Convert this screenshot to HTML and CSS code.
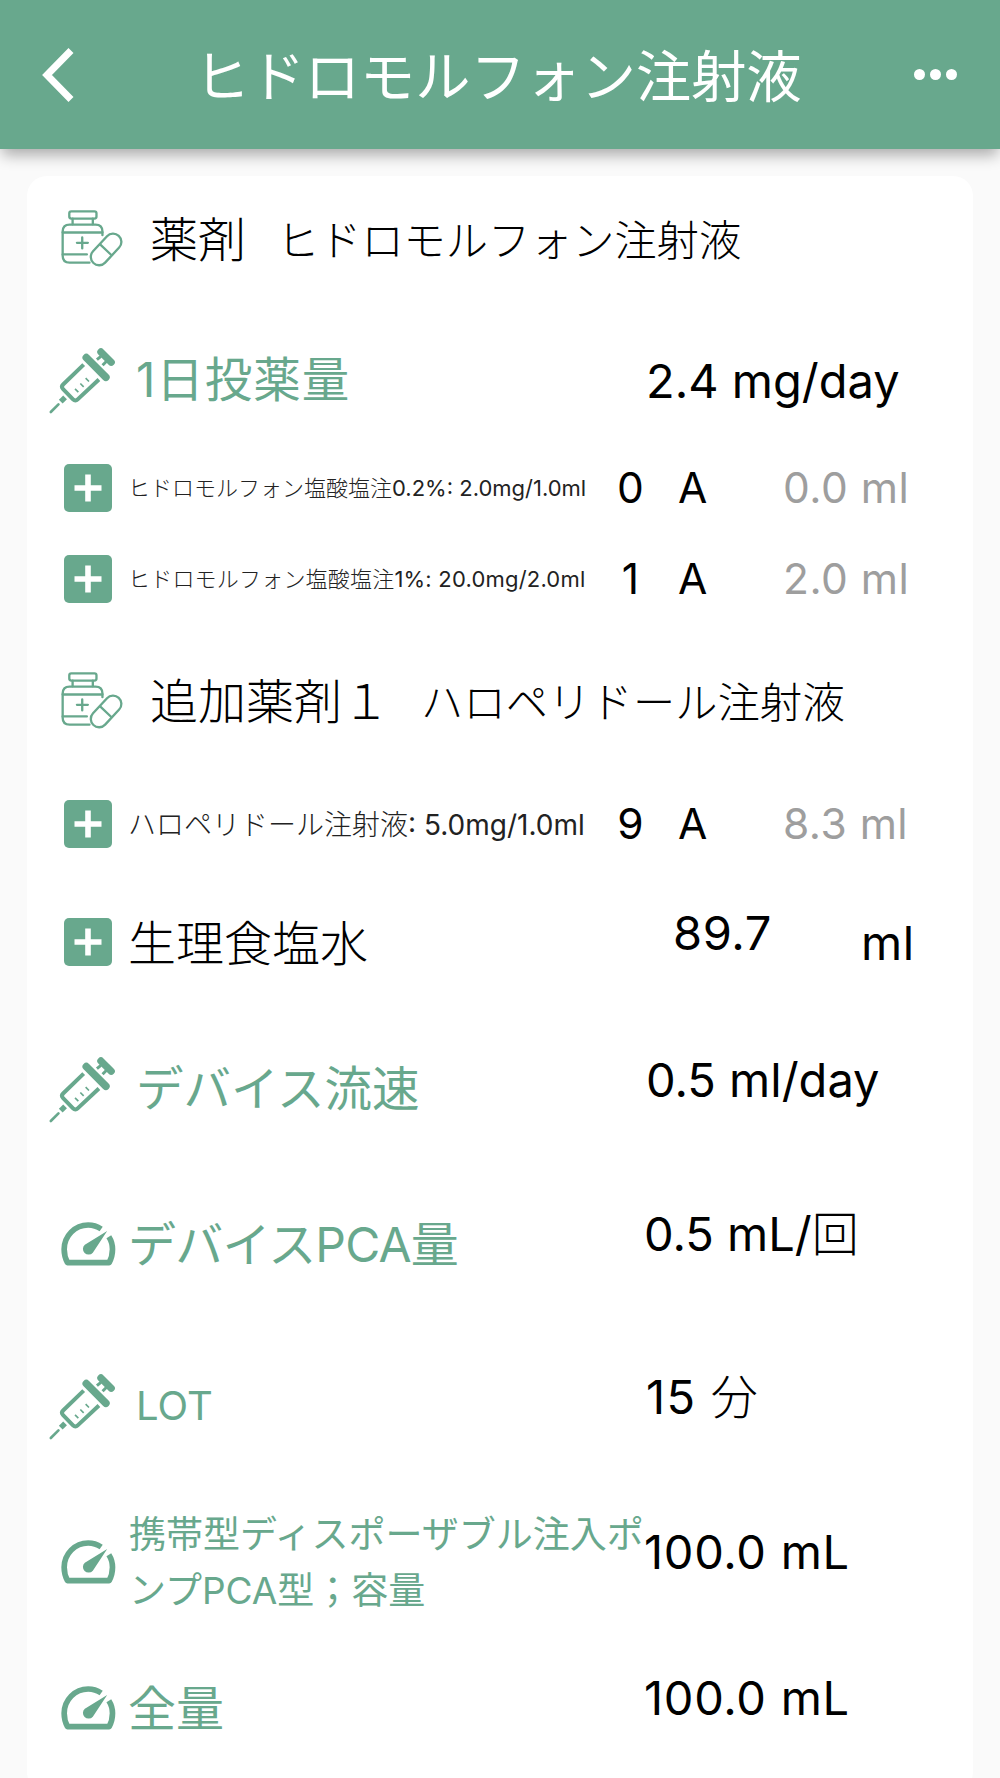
FILE: index.html
```html
<!DOCTYPE html>
<html lang="ja">
<head>
    <meta charset="UTF-8">
    <meta name="viewport" content="width=device-width, initial-scale=1.0">
    <title>ヒドロモルフォン注射液</title>
    <link rel="stylesheet" href="styles.css">
</head>
<body>
    <!-- Shared icons -->
    <svg class="icon-defs" width="0" height="0">
        <symbol id="bottle" viewBox="90 55 190 178">
            <g fill="none" stroke="currentColor" stroke-width="7" stroke-linecap="round" stroke-linejoin="round">
                <rect x="118" y="65" width="82" height="22" rx="6"/>
                <path d="M128 87v17M189 87v17"/>
                <path d="M218 137V126Q218 105 197 105H119Q98 105 98 126V199Q98 220 119 220H179"/>
                <path d="M98 129H218M98 195H171M157 144V177M141 160H174"/>
                <rect x="173" y="155" width="112" height="50" rx="25" transform="rotate(-47 229 180)"/>
                <path d="M211 165L244 196"/>
            </g>
        </symbol>
        <symbol id="syringe" viewBox="50 45 210 205">
            <g fill="none" stroke="currentColor">
                <path stroke-width="8" stroke-linecap="round" d="M61 244L84 221"/>
                <path stroke-width="16" d="M91 213L104 200"/>
                <path stroke-width="12" d="M160 101L98 161Q91 168 98 175L128 206Q135 213 142 206L206 146"/>
                <path stroke-width="23" stroke-linecap="round" d="M168 80L227 139"/>
                <path stroke-width="5" d="M134 174L144 184M150 158L160 168M166 142L176 152"/>
                <path stroke-width="22" stroke-linecap="round" d="M212 63L243 94"/>
                <path stroke-width="9" d="M200 86L212 76M217 103L229 91"/>
            </g>
        </symbol>
        <symbol id="gauge" viewBox="90 543 170 138">
            <path fill="none" stroke="currentColor" stroke-width="17" stroke-linejoin="round" d="M213 567Q195 555 174 555A72 73 0 0 0 102 628Q102 650 112 668H237Q247 650 247 628Q247 607 236 590"/>
            <path fill="currentColor" d="M231 573L164 614A17 17 0 1 0 188 638Z"/>
        </symbol>
        <symbol id="plus" viewBox="0 0 48 48">
            <rect width="48" height="48" rx="5" fill="currentColor"/>
            <path d="M24 10.5V37.5M10.5 24H37.5" stroke="#fff" stroke-width="5.6"/>
        </symbol>
    </svg>

    <header class="app-bar">
        <svg class="back" viewBox="0 0 32 54"><path d="M29 2.5L5 27L29 51.5" fill="none" stroke="#fff" stroke-width="7"/></svg>
        <h1>ヒドロモルフォン注射液</h1>
        <svg class="more" viewBox="0 0 43 11"><g fill="#fff"><circle cx="5.5" cy="5.5" r="5.5"/><circle cx="21.5" cy="5.5" r="5.5"/><circle cx="37.5" cy="5.5" r="5.5"/></g></svg>
    </header>

    <main class="card">
        <div class="drug">
            <svg class="bottle"><use href="#bottle"/></svg>
            <span class="drug-type">薬剤</span>
            <span class="drug-name">ヒドロモルフォン注射液</span>
        </div>
        <div class="item">
            <svg class="syringe"><use href="#syringe"/></svg>
            <span class="label indent daily">1日投薬量</span>
            <span class="value per-day">2.4 mg/day</span>
        </div>
        <div class="dose">
            <svg class="plus"><use href="#plus"/></svg>
            <span class="dose-name small">ヒドロモルフォン塩酸塩注<span class="strength">0.2%: 2.0mg/1.0ml</span></span>
            <span class="count">0</span>
            <span class="unit">A</span>
            <span class="volume">0.0 ml</span>
        </div>
        <div class="dose">
            <svg class="plus"><use href="#plus"/></svg>
            <span class="dose-name small wide">ヒドロモルフォン塩酸塩注<span class="strength">1%: 20.0mg/2.0ml</span></span>
            <span class="count">1</span>
            <span class="unit">A</span>
            <span class="volume">2.0 ml</span>
        </div>
        <div class="drug">
            <svg class="bottle"><use href="#bottle"/></svg>
            <span class="drug-type">追加薬剤１</span>
            <span class="drug-name wide">ハロペリドール注射液</span>
        </div>
        <div class="dose">
            <svg class="plus"><use href="#plus"/></svg>
            <span class="dose-name">ハロペリドール注射液<span class="strength">: 5.0mg/1.0ml</span></span>
            <span class="count">9</span>
            <span class="unit">A</span>
            <span class="volume">8.3 ml</span>
        </div>
        <div class="saline">
            <svg class="plus"><use href="#plus"/></svg>
            <span class="saline-name">生理食塩水</span>
            <span class="value raised">89.7</span>
            <span class="value">ml</span>
        </div>
        <div class="item">
            <svg class="syringe"><use href="#syringe"/></svg>
            <span class="label indent">デバイス流速</span>
            <span class="value raised per-day">0.5 ml/day</span>
        </div>
        <div class="item device">
            <svg class="gauge"><use href="#gauge"/></svg>
            <span class="label pca">デバイスPCA量</span>
            <span class="value raised per-push">0.5 mL/<span class="kanji">回</span></span>
        </div>
        <div class="item">
            <svg class="syringe"><use href="#syringe"/></svg>
            <span class="label indent lot">LOT</span>
            <span class="value raised minutes">15 <span class="kanji">分</span></span>
        </div>
        <div class="item device">
            <svg class="gauge"><use href="#gauge"/></svg>
            <span class="label long">携帯型ディスポーザブル注入ポンプPCA型；容量</span>
            <span class="value raised total">100.0 mL</span>
        </div>
        <div class="item device">
            <svg class="gauge"><use href="#gauge"/></svg>
            <span class="label">全量</span>
            <span class="value raised total">100.0 mL</span>
        </div>
    </main>
</body>
</html>
```
FILE: styles.css
```css
* {
    box-sizing: border-box;
}
body {
    margin: 0;
    height: 100vh;
    overflow: hidden;
    background: #fafafa;
    color: #000;
    font-family: Inter, "Noto Sans CJK JP", sans-serif;
    white-space: nowrap;
}
.icon-defs {
    position: absolute;
}
.app-bar {
    display: flex;
    align-items: center;
    justify-content: space-between;
    height: 149px;
    padding: 0 43px 0 42px;
    background: #68a88d;
    color: #fff;
    box-shadow: 0 8px 14px -2px rgba(0, 0, 0, 0.32);
}
.app-bar h1 {
    margin: 0;
    padding: 6px 0 0 8px;
    font-size: 55.2px;
    font-weight: 400;
    line-height: 1;
}
.back {
    width: 32px;
    height: 54px;
}
.more {
    width: 43px;
    height: 11px;
}
.card {
    display: grid;
    grid-template-rows: 128px 152px 64px 118px 128px 116px 120px 174px 136px 188px 124px 168px;
    margin: 27px 27px 0;
    background: #fff;
    border-radius: 20px;
}
.drug,
.item,
.dose,
.saline {
    display: grid;
    align-items: center;
}
.drug {
    grid-template-columns: 123px auto auto;
    justify-content: start;
}
.item {
    grid-template-columns: 101px 518px 1fr;
}
.device {
    grid-template-columns: 101px 516px 1fr;
}
.dose {
    grid-template-columns: 101px 476px 52px 126px 1fr;
}
.saline {
    grid-template-columns: 101px 545px 188px 1fr;
}
.bottle,
.syringe,
.gauge,
.plus {
    color: #68a88d;
}
.bottle {
    width: 63px;
    height: 59px;
    margin: 0 0 5px 33px;
}
.syringe {
    width: 70px;
    height: 68px;
    margin-left: 20px;
}
.gauge {
    width: 57px;
    height: 46px;
    margin-left: 33px;
}
.plus {
    width: 48px;
    height: 48px;
    margin-left: 37px;
}
.drug-type {
    margin-bottom: 8px;
    font-size: 48px;
    font-weight: 300;
}
.drug-name {
    margin: 0 0 6px 31px;
    font-size: 42.2px;
    font-weight: 300;
}
.label {
    margin-bottom: 7px;
    color: #68a88d;
    font-size: 48px;
}
.indent {
    padding-left: 8px;
    font-size: 47.5px;
}
.daily {
    letter-spacing: 1px;
}
.pca {
    letter-spacing: -0.8px;
}
.lot {
    margin-bottom: 1px;
    font-size: 40px;
}
.long {
    margin: 2px 0 0 1px;
    font-size: 37px;
    line-height: 56px;
    white-space: normal;
}
.value {
    font-size: 47px;
    font-weight: 380;
    letter-spacing: 0.6px;
}
.raised {
    margin-bottom: 20px;
}
.per-day {
    letter-spacing: 0;
}
.per-push {
    margin-bottom: 27px;
    letter-spacing: 0;
}
.minutes {
    margin-bottom: 26px;
    letter-spacing: 1.3px;
}
.total {
    margin-bottom: 22px;
    letter-spacing: 0.7px;
}
.kanji {
    font-weight: 300;
}
.dose-name {
    margin-bottom: 2px;
    color: #222;
    font-size: 28px;
    font-weight: 300;
}
.small {
    margin-bottom: 4px;
    font-size: 22px;
}
.strength {
    font-weight: 400;
}
.wide {
    letter-spacing: 0.2px;
}
.count,
.unit,
.volume {
    margin-bottom: 1px;
    font-size: 42.5px;
    font-weight: 380;
}
.count {
    padding-left: 1px;
    text-align: center;
}
.unit {
    padding-left: 22px;
}
.volume {
    padding-left: 1px;
    color: #9e9e9e;
    letter-spacing: 0.5px;
}
.saline-name {
    margin-bottom: 4px;
    font-size: 48px;
    font-weight: 300;
}
```
